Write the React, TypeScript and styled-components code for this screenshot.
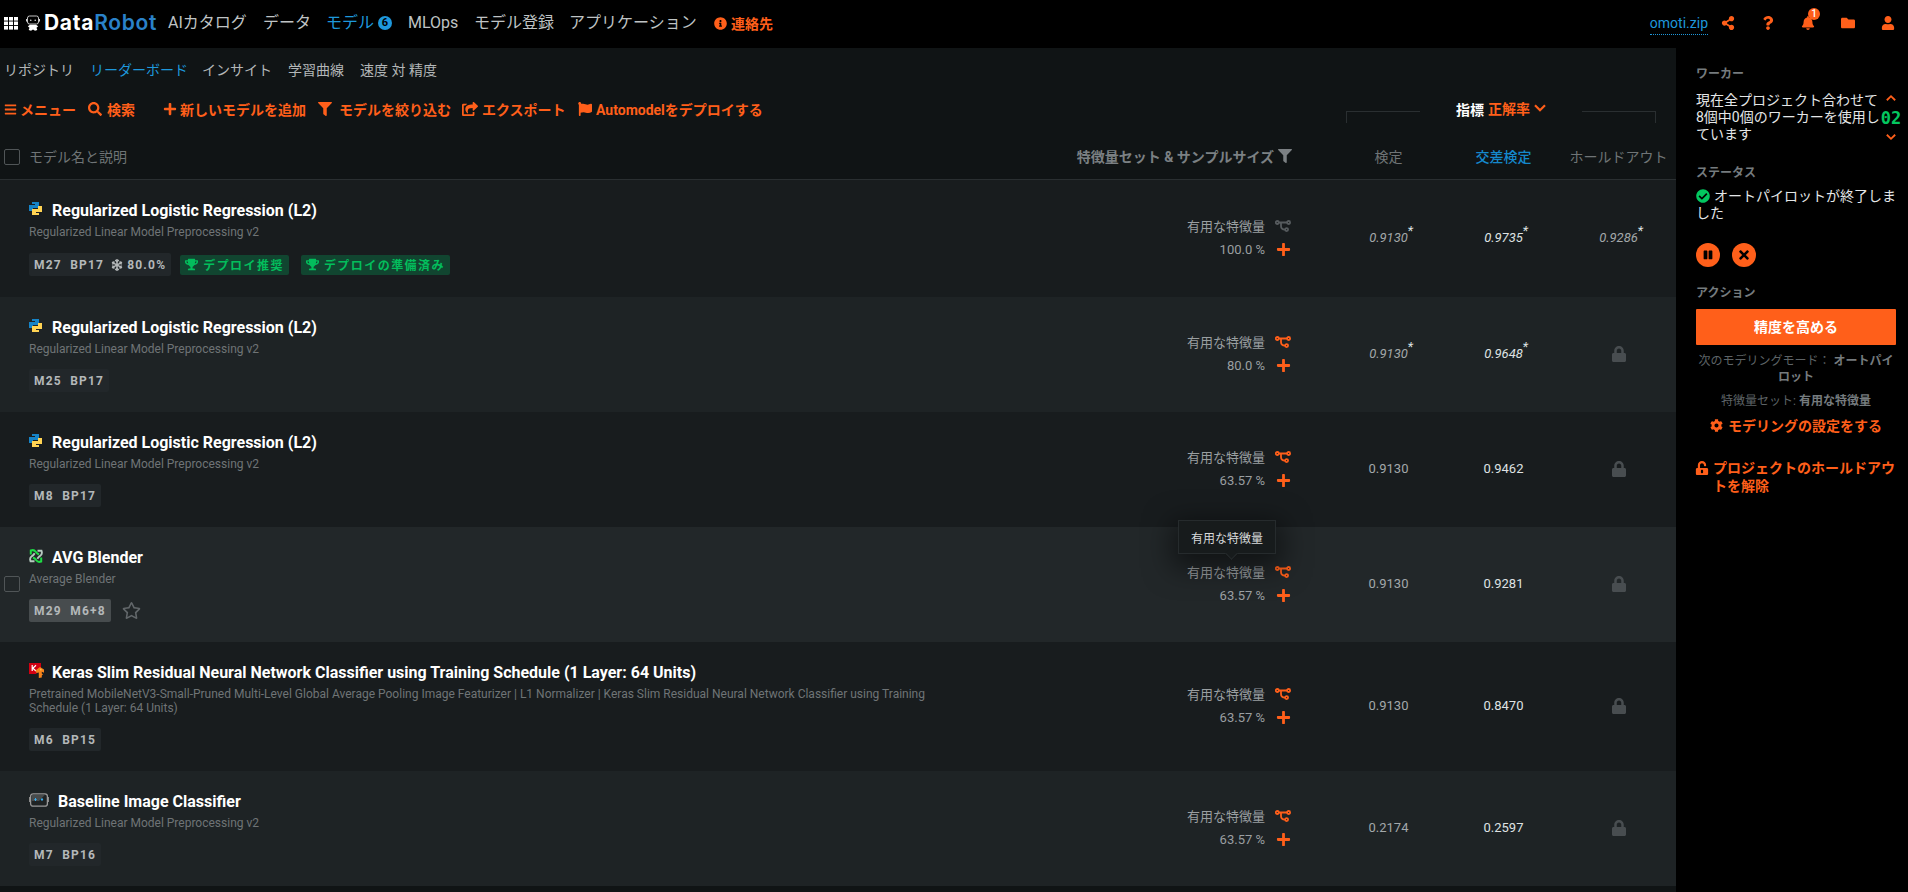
import React from "react";
import styled, { createGlobalStyle, css } from "styled-components";
import {
  FaBars,
  FaBell,
  FaCheckCircle,
  FaCog,
  FaFilter,
  FaFlag,
  FaFolder,
  FaInfoCircle,
  FaLock,
  FaPause,
  FaPlus,
  FaQuestion,
  FaRegStar,
  FaSearch,
  FaShareAlt,
  FaShareSquare,
  FaSnowflake,
  FaTimes,
  FaTrophy,
  FaUnlockAlt,
  FaUser,
} from "react-icons/fa";

const c = {
  orange: "#ff5f1a",
  blue: "#1e98dc",
  green: "#03c75f",
  text: "#c3c7c8",
  muted: "#6f7476",
  line: "#2a2f31",
};

const GlobalStyle = createGlobalStyle`
  *, *::before, *::after { box-sizing: border-box; }
  body {
    margin: 0;
    background: #101415;
    color: ${c.text};
    font-family: Roboto, "Noto Sans CJK JP", sans-serif;
    font-size: 14px;
    overflow: hidden;
  }
  svg { display: block; flex: none; }
`;

const Page = styled.div`
  height: 892px;
  display: flex;
  flex-direction: column;
`;

/* ---------- top bar ---------- */

const TopBar = styled.header`
  height: 48px;
  flex: none;
  background: #000;
  display: flex;
  align-items: center;
  padding: 0 14px 2px 4px;
`;

const Brand = styled.div`
  display: flex;
  align-items: center;
  gap: 8px;
  width: 164px;
  color: #fff;
`;

const BrandName = styled.span`
  margin-left: -4px;
  font: 700 21px/20px Inter, sans-serif;
  letter-spacing: 0.7px;
  b {
    color: #2a82c9;
    font-weight: 600;
  }
`;

const NavItem = styled.a<{ $w: number; $active?: boolean }>`
  width: ${(p) => p.$w}px;
  display: flex;
  align-items: center;
  gap: 4px;
  font-size: 16px;
  line-height: 22px;
  white-space: nowrap;
  color: ${(p) => (p.$active ? c.blue : "#bfc3c4")};
`;

const Count = styled.span`
  width: 14px;
  height: 14px;
  border-radius: 50%;
  background: ${c.blue};
  color: #000;
  font-size: 11px;
  font-weight: 700;
  line-height: 14px;
  text-align: center;
`;

const Contact = styled.a`
  display: flex;
  align-items: center;
  gap: 4px;
  color: ${c.orange};
  font-weight: 700;
`;

const TopRight = styled.div`
  margin-left: auto;
  display: flex;
  align-items: center;
  color: ${c.orange};
`;

const ProjectName = styled.a`
  color: ${c.blue};
  line-height: 19px;
  padding-top: 2px;
  padding-bottom: 1px;
  margin-right: 13px;
  border-bottom: 1px dotted ${c.blue};
`;

const TopIcon = styled.span<{ $w: number }>`
  position: relative;
  width: ${(p) => p.$w}px;
`;

const Alert = styled.span`
  position: absolute;
  left: 7px;
  top: -8px;
  width: 12px;
  height: 12px;
  border-radius: 50%;
  background: ${c.orange};
  color: #fff;
  font-size: 10px;
  font-weight: 500;
  line-height: 12px;
  text-align: center;
`;

/* ---------- body ---------- */

const Body = styled.div`
  flex: 1;
  display: flex;
  min-height: 0;
`;

const Main = styled.main`
  width: 1676px;
  display: flex;
  flex-direction: column;
`;

const SubNav = styled.nav`
  height: 42px;
  display: flex;
  align-items: center;
  padding: 0 0 0 4px;
`;

const SubNavItem = styled.a<{ $w: number; $active?: boolean }>`
  width: ${(p) => p.$w}px;
  white-space: nowrap;
  color: ${(p) => (p.$active ? c.blue : "#b3b7b8")};
`;

const ToolRow = styled.div`
  height: 40px;
  display: flex;
  align-items: center;
  padding: 0 0 2px 4px;
`;

const Tool = styled.a<{ $w: number; $gap: number }>`
  width: ${(p) => p.$w}px;
  display: flex;
  align-items: center;
  gap: ${(p) => p.$gap}px;
  color: ${c.orange};
  font-weight: 700;
  white-space: nowrap;
`;

const MetricBar = styled.div`
  margin-left: auto;
  width: 310px;
  margin-right: 20px;
  display: flex;
  justify-content: space-between;
  align-items: center;
`;

const Bracket = styled.span<{ $side: "left" | "right" }>`
  width: 74px;
  height: 12px;
  margin-top: 15px;
  border-top: 1px solid ${c.line};
  ${(p) => (p.$side === "left" ? css`border-left: 1px solid ${c.line};` : css`border-right: 1px solid ${c.line};`)}
`;

const Metric = styled.span`
  display: flex;
  align-items: center;
  gap: 4px;
  color: #fff;
  font-weight: 700;
  a {
    display: flex;
    align-items: center;
    gap: 4px;
    color: ${c.orange};
    padding-bottom: 3px;
  }
`;

const columns = css`
  display: grid;
  grid-template-columns: 29px 1fr 240px 34px 115px 115px 115px;
`;

const TableHead = styled.div`
  ${columns}
  height: 50px;
  align-items: center;
  padding-top: 3px;
  border-bottom: 1px solid ${c.line};
  color: ${c.muted};
`;

const CheckBox = styled.span`
  display: block;
  width: 16px;
  height: 16px;
  margin: 1px 0 0 4px;
  border: 1px solid #505557;
  border-radius: 2px;
`;

const RowSelect = styled.span`
  padding-bottom: 3px;
`;

const HeadCell = styled.span<{ $kind?: "active" | "strong" }>`
  display: flex;
  justify-content: ${(p) => (p.$kind === "strong" ? "flex-end" : "center")};
  align-items: center;
  gap: 4px;
  white-space: nowrap;
  font-weight: ${(p) => (p.$kind === "strong" ? 700 : p.$kind ? 500 : 400)};
  color: ${(p) => (p.$kind === "active" ? "#1588cc" : p.$kind === "strong" ? "#7b8083" : c.muted)};
`;

const HeadSet = styled(HeadCell)`
  width: 235px;
`;

const Row = styled.article<{ $h: number; $tone: "dark" | "light" | "hover" }>`
  ${columns}
  height: ${(p) => p.$h}px;
  align-items: center;
  background: ${(p) => ({ dark: "#181c1e", light: "#1e2325", hover: "#222729" })[p.$tone]};
`;

const Info = styled.div`
  align-self: start;
  padding-top: 19px;
`;

const Title = styled.h3<{ $gap: number }>`
  margin: 0;
  height: 24px;
  display: flex;
  align-items: center;
  gap: ${(p) => p.$gap}px;
  font-size: 16px;
  font-weight: 700;
  line-height: 24px;
  color: #fff;
  svg { margin-bottom: 5px; }
`;

const Description = styled.p`
  margin: 2px 0 0;
  width: 910px;
  font-size: 12px;
  line-height: 14px;
  color: ${c.muted};
`;

const Tags = styled.div<{ $h: number }>`
  display: flex;
  align-items: center;
  margin-top: 13px;
  height: ${(p) => p.$h}px;
`;

const Tag = styled.span<{ $hover?: boolean }>`
  height: 23px;
  padding: 0 5px;
  display: flex;
  align-items: center;
  border-radius: 2px;
  background: ${(p) => (p.$hover ? "#474c4e" : "#22272a")};
  color: #b4b8b9;
  font-size: 12px;
  font-weight: 700;
  letter-spacing: 1.2px;
  white-space: pre;
  svg { margin: 0 4px 0 7px; }
`;

const Deploy = styled.span<{ $ml: number }>`
  height: 20px;
  margin-left: ${(p) => p.$ml}px;
  padding: 0 5px;
  display: flex;
  align-items: center;
  gap: 5px;
  border-radius: 2px;
  background: #114530;
  color: #03bd5c;
  font-size: 12px;
  font-weight: 700;
  letter-spacing: 1.45px;
`;

const Star = styled.span`
  margin-left: 11px;
  color: #62676a;
`;

const Features = styled.div`
  width: 234px;
  display: flex;
  flex-direction: column;
  gap: 5px;
  padding-bottom: 2px;
`;

const FeatureLine = styled.div`
  position: relative;
  display: flex;
  align-items: center;
  justify-content: flex-end;
  height: 19px;
  font-size: 13px;
  color: #9a9fa1;
`;

const FeatureIcon = styled.span<{ $off?: boolean }>`
  width: 26px;
  display: flex;
  justify-content: flex-end;
  color: ${(p) => (p.$off ? "#565b5e" : c.orange)};
`;

const Tooltip = styled.div`
  position: absolute;
  right: 15px;
  bottom: 27px;
  width: 98px;
  height: 34px;
  display: flex;
  align-items: center;
  justify-content: center;
  background: #171b1c;
  border: 1px solid #262b2d;
  color: #d7dadb;
  font-size: 12px;
  box-shadow: 0 8px 28px 6px rgba(0, 0, 0, 0.5);
  &::after {
    content: "";
    position: absolute;
    left: 48px;
    bottom: -5px;
    width: 9px;
    height: 9px;
    background: #171b1c;
    border: solid #262b2d;
    border-width: 0 1px 1px 0;
    transform: rotate(45deg);
  }
`;

const Score = styled.div<{ $main?: boolean; $italic?: boolean }>`
  display: flex;
  justify-content: center;
  position: relative;
  font-size: 13px;
  font-style: ${(p) => (p.$italic ? "italic" : "normal")};
  color: ${(p) => (p.$main ? "#dfe2e3" : "#a3a8aa")};
  padding-bottom: 2px;
`;

const Mark = styled.span`
  position: absolute;
  left: 50%;
  margin-left: 19px;
  top: -7px;
  color: #dfe2e3;
`;

const LockMark = styled.span`
  color: #484d50;
`;

/* ---------- side panel ---------- */

const Side = styled.aside`
  width: 232px;
  background: #000;
  padding: 17px 0 0 20px;
`;

const Label = styled.h4<{ $mt?: number }>`
  margin: ${(p) => p.$mt ?? 0}px 0 0;
  font-size: 12px;
  font-weight: 700;
  line-height: 18px;
  color: #757b7e;
`;

const Workers = styled.div`
  display: flex;
  margin-top: 9px;
  height: 52px;
`;

const SideText = styled.p<{ $w: number; $mt?: number }>`
  margin: ${(p) => p.$mt ?? 0}px 0 0;
  width: ${(p) => p.$w}px;
  flex: none;
  line-height: 17px;
  color: #e4e6e7;
`;

const Stepper = styled.div`
  width: 20px;
  padding: 2px 0 3px;
  display: flex;
  flex-direction: column;
  align-items: center;
  justify-content: space-between;
  color: ${c.orange};
`;

const WorkerCount = styled.span`
  color: ${c.green};
  font: 700 17px/18px "DejaVu Sans Mono", monospace;
`;

const InlineIcon = styled.span`
  display: inline-block;
  vertical-align: -2px;
  margin-right: 4px;
  color: ${c.green};
`;

const Controls = styled.div`
  display: flex;
  gap: 12px;
  margin-top: 21px;
`;

const Round = styled.button`
  width: 24px;
  height: 24px;
  padding: 0;
  border: 0;
  border-radius: 50%;
  display: grid;
  place-items: center;
  background: ${c.orange};
  color: #000;
`;

const Primary = styled.button`
  width: 200px;
  height: 36px;
  margin-top: 7px;
  padding: 0;
  border: 0;
  border-radius: 1px;
  background: ${c.orange};
  color: #fff;
  font: 700 14px/20px Roboto, "Noto Sans CJK JP", sans-serif;
`;

const Note = styled.p<{ $mt: number }>`
  margin: ${(p) => p.$mt}px 0 0;
  width: 200px;
  text-align: center;
  font-size: 12px;
  line-height: 16px;
  color: #5d6366;
  b {
    color: #757b7e;
    font-weight: 700;
  }
`;

const SideLink = styled.a<{ $mt: number; $center?: boolean }>`
  display: flex;
  justify-content: ${(p) => (p.$center ? "center" : "flex-start")};
  gap: 5px;
  width: ${(p) => (p.$center ? 200 : 202)}px;
  margin-top: ${(p) => p.$mt}px;
  color: ${c.orange};
  font-weight: 700;
  line-height: 18px;
  svg { margin-top: 2px; }
`;

const SideLinkIcon = styled.span`
  width: 13px;
  margin-left: -1px;
`;

/* ---------- drawings ---------- */

const GridIcon = () => (
  <svg width="14" height="13" viewBox="0 0 14 13" fill="#fff">
    {[0, 5, 10].map((x) => [0, 4.5, 9].map((y) => <rect key={`${x}-${y}`} x={x} y={y} width="4" height="3.6" />))}
  </svg>
);

const RobotIcon = () => (
  <svg width="14" height="17" viewBox="0 0 14 17">
    <rect x="1.5" y="1" width="11" height="8" rx="2" fill="none" stroke="#d8d8d8" strokeWidth="0.9" />
    <path d="M0.5 4v2.5M13.5 4v2.5" stroke="#d8d8d8" />
    <circle cx="4.8" cy="5.2" r="0.7" fill="#fff" />
    <circle cx="9.2" cy="5.2" r="0.7" fill="#fff" />
    <path d="M4 9.8h6l2.2 1.4-1.7 1.5L11.3 15l-2.3.7L7 14.4l-2 1.3-2.3-.7.8-2.3-1.7-1.5z" fill="#fff" />
  </svg>
);

const Chevron = ({ up, w = 12 }: { up?: boolean; w?: number }) => (
  <svg width={w} height="8" viewBox="0 0 12 8" fill="none" stroke="currentColor" strokeWidth="2.2">
    <path d={up ? "M1 6.7 6 1.8l5 4.9" : "M1 1.3 6 6.2l5-4.9"} />
  </svg>
);

const BlueprintIcon = () => (
  <svg width="16" height="12" viewBox="0 0 16 12" fill="none" stroke="currentColor" strokeWidth="1.8">
    <circle cx="2.3" cy="2.5" r="1.5" />
    <circle cx="13.6" cy="2.5" r="1.5" />
    <circle cx="11.6" cy="9.6" r="1.5" />
    <path d="M3.8 2.5h8.3M6 2.5v3.6q0 3.5 4 3.5" />
  </svg>
);

const PythonIcon = () => (
  <svg width="13" height="13" viewBox="0 0 13 13">
    <path d="M3 0h7v6H4v3H0V3h6V2H3z" fill="#1683c6" />
    <path d="M10 13H3V7h6V4h4v6H7v1h3z" fill="#ffd353" />
  </svg>
);

const BlenderIcon = () => (
  <svg width="14" height="14" viewBox="0 0 14 14" fill="none">
    <path d="M1.800 5.500V1.500Q5 .4 6.500 2.500T10 5.500" stroke="#1fdc45" strokeWidth="2" />
    <path d="M12.200 8.500v4Q9 13.600 7.500 11.500T4 8.500" stroke="#1fdc45" strokeWidth="2" />
    <path d="M8.500 1.800h4Q13.600 5 11.500 6.500T8.300 9.800" stroke="#b7c9c0" strokeWidth="1.900" />
    <path d="M5.500 12.200h-4Q.4 9 2.500 7.500T5.700 4.200" stroke="#b7c9c0" strokeWidth="1.900" />
  </svg>
);

const KerasIcon = () => (
  <svg width="15" height="15" viewBox="0 0 15 15">
    <path d="M0 0h12v5L7 11H0z" fill="#d20012" />
    <path d="M3.200 2v6M7 2.200 3.800 5.200 7 8" stroke="#fff" strokeWidth="1.200" fill="none" />
    <path d="M6.500 7.500 11 4l4 2.500v3.200l-2.200-1v1.800l1.200.8-1.200 1.200v2L9.800 15V9.500L7.500 10z" fill="#f7841c" />
    <path d="M11 5.500l2.500 1.500-2.500.5z" fill="#ffc24a" />
  </svg>
);

const BaselineIcon = () => (
  <svg width="20" height="14" viewBox="0 0 20 14">
    <rect x="0" y="4" width="2" height="5" fill="#8b8b8b" />
    <rect x="18" y="4" width="2" height="5" fill="#8b8b8b" />
    <rect x="1.6" y="0.8" width="16.8" height="12.4" rx="2.5" fill="#1f2324" stroke="#999" strokeWidth="1.3" />
    <path d="M3 1.800h13L10 8H3z" fill="#474b4c" />
    <path d="M6.500 5v3M13 5v3M5.400 6.500h2.200M11.900 6.500h2.200" stroke="#39aef0" strokeWidth="1" />
  </svg>
);

/* ---------- data ---------- */

type Model = {
  name: string;
  desc: string;
  tag: string;
  icon: React.ReactNode;
  gap: number;
  h: number;
  tone: "dark" | "light" | "hover";
  size: string;
  scores: [string, string, string?];
  starred?: boolean;
  frozen?: boolean;
};

const linear = "Regularized Linear Model Preprocessing v2";

const models: Model[] = [
  { name: "Regularized Logistic Regression (L2)", desc: linear, tag: "M27  BP17", icon: <PythonIcon />, gap: 10, h: 117, tone: "dark", size: "100.0 %", scores: ["0.9130", "0.9735", "0.9286"], starred: true, frozen: true },
  { name: "Regularized Logistic Regression (L2)", desc: linear, tag: "M25  BP17", icon: <PythonIcon />, gap: 10, h: 115, tone: "light", size: "80.0 %", scores: ["0.9130", "0.9648"], starred: true },
  { name: "Regularized Logistic Regression (L2)", desc: linear, tag: "M8  BP17", icon: <PythonIcon />, gap: 10, h: 115, tone: "dark", size: "63.57 %", scores: ["0.9130", "0.9462"] },
  { name: "AVG Blender", desc: "Average Blender", tag: "M29  M6+8", icon: <BlenderIcon />, gap: 9, h: 115, tone: "hover", size: "63.57 %", scores: ["0.9130", "0.9281"] },
  {
    name: "Keras Slim Residual Neural Network Classifier using Training Schedule (1 Layer: 64 Units)",
    desc: "Pretrained MobileNetV3-Small-Pruned Multi-Level Global Average Pooling Image Featurizer | L1 Normalizer | Keras Slim Residual Neural Network Classifier using Training Schedule (1 Layer: 64 Units)",
    tag: "M6  BP15", icon: <KerasIcon />, gap: 8, h: 129, tone: "dark", size: "63.57 %", scores: ["0.9130", "0.8470"],
  },
  { name: "Baseline Image Classifier", desc: linear, tag: "M7  BP16", icon: <BaselineIcon />, gap: 9, h: 115, tone: "light", size: "63.57 %", scores: ["0.2174", "0.2597"] },
];

const ModelRow = ({ m }: { m: Model }) => {
  const hover = m.tone === "hover";
  return (
    <Row $h={m.h} $tone={m.tone}>
      <RowSelect>{hover && <CheckBox />}</RowSelect>
      <Info>
        <Title $gap={m.gap}>
          {m.icon}
          {m.name}
        </Title>
        <Description>{m.desc}</Description>
        <Tags $h={m.frozen ? 25 : 23}>
          <Tag $hover={hover}>
            {m.tag}
            {m.frozen && (
              <>
                <FaSnowflake size={12} />
                80.0%
              </>
            )}
          </Tag>
          {m.frozen && (
            <>
              <Deploy $ml={9}>
                <FaTrophy size={13} />
                デプロイ推奨
              </Deploy>
              <Deploy $ml={12}>
                <FaTrophy size={13} />
                デプロイの準備済み
              </Deploy>
            </>
          )}
          {hover && (
            <Star>
              <FaRegStar size={19} />
            </Star>
          )}
        </Tags>
      </Info>
      <Features>
        <FeatureLine>
          {hover && <Tooltip>有用な特徴量</Tooltip>}
          有用な特徴量
          <FeatureIcon $off={m.frozen}>
            <BlueprintIcon />
          </FeatureIcon>
        </FeatureLine>
        <FeatureLine>
          {m.size}
          <FeatureIcon>
            <FaPlus size={15} />
          </FeatureIcon>
        </FeatureLine>
      </Features>
      <span />
      {[0, 1, 2].map((i) => (
        <Score key={i} $main={i === 1} $italic={m.starred}>
          {m.scores[i] ?? (
            <LockMark>
              <FaLock size={16} />
            </LockMark>
          )}
          {m.starred && m.scores[i] && <Mark>*</Mark>}
        </Score>
      ))}
    </Row>
  );
};

export default function App() {
  return (
    <Page>
      <GlobalStyle />
      <TopBar>
        <Brand>
          <GridIcon />
          <RobotIcon />
          <BrandName>
            Data<b>Robot</b>
          </BrandName>
        </Brand>
        <NavItem $w={95}>AIカタログ</NavItem>
        <NavItem $w={63}>データ</NavItem>
        <NavItem $w={82} $active>
          モデル<Count>6</Count>
        </NavItem>
        <NavItem $w={66}>MLOps</NavItem>
        <NavItem $w={95}>モデル登録</NavItem>
        <NavItem $w={145}>アプリケーション</NavItem>
        <Contact>
          <FaInfoCircle size={13} />
          連絡先
        </Contact>
        <TopRight>
          <ProjectName>omoti.zip</ProjectName>
          <TopIcon $w={40}><FaShareAlt size={14} /></TopIcon>
          <TopIcon $w={40}><FaQuestion size={14} /></TopIcon>
          <TopIcon $w={40}>
            <FaBell size={14} />
            <Alert>1</Alert>
          </TopIcon>
          <TopIcon $w={40}><FaFolder size={14} /></TopIcon>
          <TopIcon $w={13}><FaUser size={14} /></TopIcon>
        </TopRight>
      </TopBar>
      <Body>
        <Main>
          <SubNav>
            <SubNavItem $w={86}>リポジトリ</SubNavItem>
            <SubNavItem $w={112} $active>リーダーボード</SubNavItem>
            <SubNavItem $w={86}>インサイト</SubNavItem>
            <SubNavItem $w={72}>学習曲線</SubNavItem>
            <SubNavItem $w={90}>速度 対 精度</SubNavItem>
          </SubNav>
          <ToolRow>
            <Tool $w={84} $gap={3}><FaBars size={13} />メニュー</Tool>
            <Tool $w={75} $gap={5}><FaSearch size={14} />検索</Tool>
            <Tool $w={155} $gap={3}><FaPlus size={14} />新しいモデルを追加</Tool>
            <Tool $w={144} $gap={7}><FaFilter size={14} />モデルを絞り込む</Tool>
            <Tool $w={116} $gap={4}><FaShareSquare size={16} />エクスポート</Tool>
            <Tool $w={200} $gap={4}><FaFlag size={14} />Automodelをデプロイする</Tool>
            <MetricBar>
              <Bracket $side="left" />
              <Metric>
                指標
                <a>
                  正解率
                  <Chevron />
                </a>
              </Metric>
              <Bracket $side="right" />
            </MetricBar>
          </ToolRow>
          <TableHead>
            <CheckBox />
            <span>モデル名と説明</span>
            <HeadSet $kind="strong">
              特徴量セット &amp; サンプルサイズ
              <FaFilter size={14} />
            </HeadSet>
            <span />
            <HeadCell>検定</HeadCell>
            <HeadCell $kind="active">交差検定</HeadCell>
            <HeadCell>ホールドアウト</HeadCell>
          </TableHead>
          {models.map((m, i) => (
            <ModelRow key={i} m={m} />
          ))}
        </Main>
        <Side>
          <Label>ワーカー</Label>
          <Workers>
            <SideText $w={185}>現在全プロジェクト合わせて8個中0個のワーカーを使用しています</SideText>
            <Stepper>
              <Chevron up w={10} />
              <WorkerCount>02</WorkerCount>
              <Chevron w={10} />
            </Stepper>
          </Workers>
          <Label $mt={20}>ステータス</Label>
          <SideText $w={202} $mt={6}>
            <InlineIcon><FaCheckCircle size={14} /></InlineIcon>
            オートパイロットが終了しました
          </SideText>
          <Controls>
            <Round><FaPause size={10} /></Round>
            <Round><FaTimes size={14} /></Round>
          </Controls>
          <Label $mt={17}>アクション</Label>
          <Primary>精度を高める</Primary>
          <Note $mt={8}>
            次のモデリングモード： <b>オートパイロット</b>
          </Note>
          <Note $mt={8}>
            特徴量セット: <b>有用な特徴量</b>
          </Note>
          <SideLink $mt={8} $center><FaCog size={13} />モデリングの設定をする</SideLink>
          <SideLink $mt={24}>
            <SideLinkIcon><FaUnlockAlt size={14} /></SideLinkIcon>
            プロジェクトのホールドアウトを解除
          </SideLink>
        </Side>
      </Body>
    </Page>
  );
}
